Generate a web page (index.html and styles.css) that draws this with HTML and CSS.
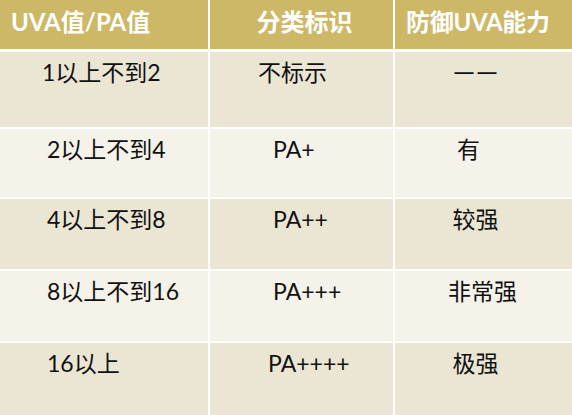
FILE: index.html
```html
<!DOCTYPE html>
<html lang="zh-CN">
<head>
<meta charset="utf-8">
<title>UVA值/PA值</title>
<link rel="stylesheet" href="styles.css">
</head>
<body>
<div class="table">
  <div class="cell head c1">UVA值/PA值</div>
  <div class="cell head c2">分类标识</div>
  <div class="cell head c3">防御UVA能力</div>

  <div class="cell odd c1 first">1以上不到2</div>
  <div class="cell odd c2 wide">不标示</div>
  <div class="cell odd c3"><span class="dash">——</span></div>

  <div class="cell even c1">2以上不到4</div>
  <div class="cell even c2">PA+</div>
  <div class="cell even c3 narrow">有</div>

  <div class="cell odd c1">4以上不到8</div>
  <div class="cell odd c2">PA++</div>
  <div class="cell odd c3">较强</div>

  <div class="cell even c1">8以上不到16</div>
  <div class="cell even c2">PA+++</div>
  <div class="cell even c3 shift">非常强</div>

  <div class="cell odd c1">16以上</div>
  <div class="cell odd c2 last">PA++++</div>
  <div class="cell odd c3">极强</div>
</div>
</body>
</html>
```

FILE: styles.css
```css
html, body {
  margin: 0;
  padding: 0;
  background: #ffffff;
}

.table {
  width: 572px;
  height: 415px;
  display: grid;
  grid-template-columns: 208px 183px 177px;
  grid-template-rows: 50px 75px 68px 70px 70px 72px;
  column-gap: 2px;
  row-gap: 2px;
  background: #ffffff;
  overflow: hidden;
}

.cell {
  font-family: Lato, "Noto Sans CJK SC", sans-serif;
  font-size: 23px;
  line-height: 28px;
  color: #111111;
  white-space: nowrap;
  box-sizing: border-box;
}

.head {
  background: #ccb867;
  color: #ffffff;
  font-size: 24px;
  font-weight: 700;
  padding-top: 8px;
  border-bottom: 1px solid #ffffff;
}

.head.c1 { padding-left: 11px; }
.head.c2 { text-align: center; padding-left: 6px; }
.head.c3 { padding-left: 11px; letter-spacing: -0.3px; }

.odd { background: #ebe5d3; }
.even { background: #f5f2e9; }

.odd, .even { padding-top: 6px; }

.odd.c1, .even.c1 { padding-left: 47px; }
.odd.c1.first { padding-left: 42px; }

.odd.c2, .even.c2 { padding-left: 63px; }
.odd.c2.wide { padding-left: 48px; }
.odd.c2.last { padding-left: 58px; }

.odd.c3, .even.c3 { text-align: center; padding-right: 16px; }
.even.c3.narrow { padding-right: 30px; }
.even.c3.shift { padding-right: 2px; }

.dash {
  display: inline-block;
  font-family: "Liberation Sans", sans-serif;
  font-size: 19px;
  font-weight: 700;
  letter-spacing: 4px;
  margin-right: -4px;
  vertical-align: 3px;
}
```
